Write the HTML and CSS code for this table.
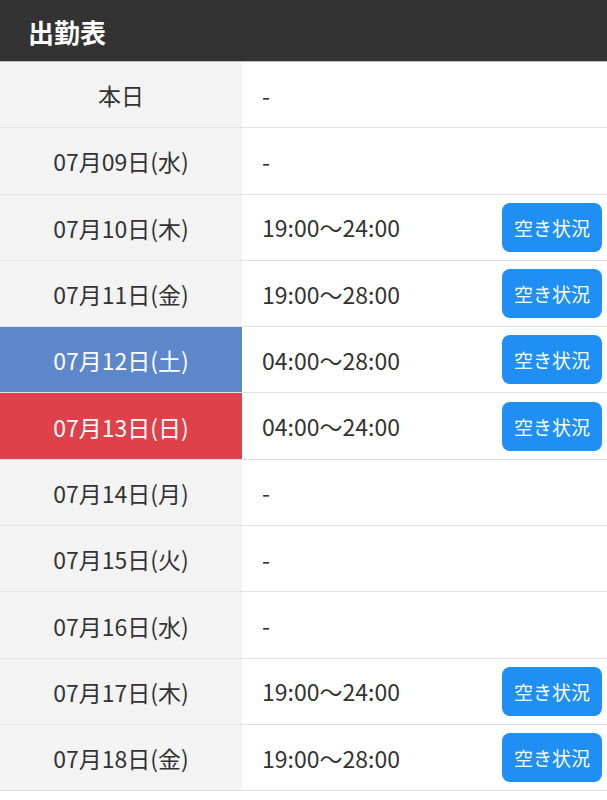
FILE: index.html
```html
<!DOCTYPE html>
<html lang="ja">
<head>
<meta charset="utf-8">
<link rel="stylesheet" href="styles.css">
</head>
<body>
<div class="header"><h1 class="title">出勤表</h1></div>
<div class="table">
  <div class="row"><div class="date">本日</div><div class="cell"><span class="time">-</span></div></div>
  <div class="row"><div class="date">07月09日(水)</div><div class="cell"><span class="time">-</span></div></div>
  <div class="row"><div class="date">07月10日(木)</div><div class="cell"><span class="time">19:00～24:00</span><a class="btn">空き状況</a></div></div>
  <div class="row"><div class="date">07月11日(金)</div><div class="cell"><span class="time">19:00～28:00</span><a class="btn">空き状況</a></div></div>
  <div class="row"><div class="date sat">07月12日(土)</div><div class="cell"><span class="time">04:00～28:00</span><a class="btn">空き状況</a></div></div>
  <div class="row"><div class="date sun">07月13日(日)</div><div class="cell"><span class="time">04:00～24:00</span><a class="btn">空き状況</a></div></div>
  <div class="row"><div class="date">07月14日(月)</div><div class="cell"><span class="time">-</span></div></div>
  <div class="row"><div class="date">07月15日(火)</div><div class="cell"><span class="time">-</span></div></div>
  <div class="row"><div class="date">07月16日(水)</div><div class="cell"><span class="time">-</span></div></div>
  <div class="row"><div class="date">07月17日(木)</div><div class="cell"><span class="time">19:00～24:00</span><a class="btn">空き状況</a></div></div>
  <div class="row"><div class="date">07月18日(金)</div><div class="cell"><span class="time">19:00～28:00</span><a class="btn">空き状況</a></div></div>
</div>
</body>
</html>
```
FILE: styles.css
```css
* { box-sizing: border-box; }
body {
  margin: 0;
  background: #fff;
  font-family: "Noto Sans CJK JP", "Noto Sans", sans-serif;
  color: #333;
}
.header {
  background: #333;
  height: 62px;
  display: flex;
  align-items: center;
  padding-left: 28px;
  padding-top: 3px;
  border-bottom: 1px solid #bbb;
}
.title {
  margin: 0;
  color: #fff;
  font-size: 26px;
  font-weight: bold;
  line-height: 1;
}
.row {
  display: flex;
  height: 66.3px;
  border-bottom: 1px solid #e2e2e2;
}
.date {
  width: 242px;
  flex: none;
  background: #f3f3f3;
  display: flex;
  align-items: center;
  justify-content: center;
  font-size: 23px;
  color: #333;
  padding-top: 1px;
}
.date.sat { background: #5c87cb; color: #fff; }
.date.sun { background: #e0404a; color: #fff; }
.cell {
  flex: 1;
  display: flex;
  align-items: center;
  justify-content: space-between;
  padding-left: 20px;
  padding-right: 5px;
  font-size: 23px;
  color: #333;
}
.btn {
  width: 100px;
  height: 49px;
  background: #1f8ff4;
  color: #fff;
  border-radius: 8px;
  display: flex;
  align-items: center;
  justify-content: center;
  font-size: 19px;
}
```
